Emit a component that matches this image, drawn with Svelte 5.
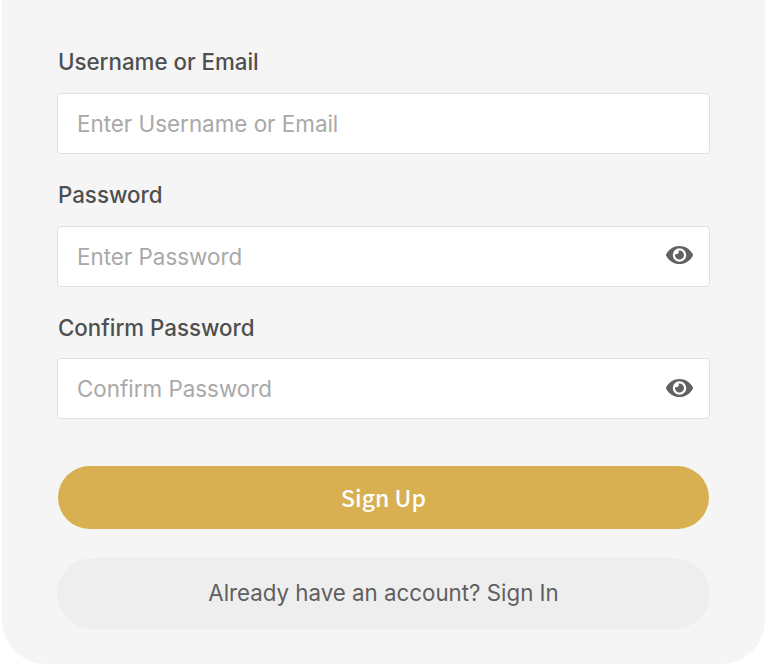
<script>
	const fields = [
		{ label: 'Username or Email', placeholder: 'Enter Username or Email', secret: false },
		{ label: 'Password', placeholder: 'Enter Password', secret: true },
		{ label: 'Confirm Password', placeholder: 'Confirm Password', secret: true }
	];
</script>

<div class="panel">
	<form class="form">
		{#each fields as f}
			<div class="field">
				<label for={f.label}>{f.label}</label>
				<div class="input-wrap">
					<input id={f.label} type={f.secret ? 'password' : 'text'} placeholder={f.placeholder} />
					{#if f.secret}
						<svg class="eye" viewBox="0 0 576 512" aria-hidden="true">
							<path d="M572.52 241.4C518.29 135.59 410.93 64 288 64S57.68 135.64 3.48 241.41a32.35 32.35 0 0 0 0 29.19C57.71 376.41 165.07 448 288 448s230.32-71.64 284.52-177.41a32.35 32.35 0 0 0 0-29.19zM288 400a144 144 0 1 1 144-144 143.93 143.93 0 0 1-144 144zm0-240a95.31 95.31 0 0 0-25.31 3.79 47.85 47.85 0 0 1-66.9 66.9A95.78 95.78 0 1 0 288 160z" />
						</svg>
					{/if}
				</div>
			</div>
		{/each}
		<button class="submit" type="button">Sign Up</button>
		<button class="signin" type="button">Already have an account? Sign In</button>
	</form>
</div>

<style>
	:global(body) {
		margin: 0;
		background: #fff;
	}

	.panel {
		box-sizing: border-box;
		width: 763px;
		height: 664px;
		margin-left: 2px;
		padding: 45.4px 55px 0;
		background: #f5f5f5;
		border-radius: 0 0 44px 44px;
		font-family: 'Inter', 'Liberation Sans', sans-serif;
	}

	.form {
		display: flex;
		flex-direction: column;
	}

	.field {
		margin-bottom: 24px;
	}

	label {
		display: block;
		height: 34px;
		margin-bottom: 13.6px;
		padding-left: 1px;
		font-size: 22.3px;
		font-weight: 550;
		line-height: 34px;
		color: #4f4f4f;
	}

	.input-wrap {
		position: relative;
	}

	input {
		box-sizing: border-box;
		display: block;
		width: 653px;
		height: 61px;
		padding: 0 19px;
		background: #fff;
		border: 1px solid #dedede;
		border-radius: 4px;
		outline: none;
		font: inherit;
		font-size: 22.4px;
		color: #4f4f4f;
	}

	input::placeholder {
		color: #a9a9a9;
		opacity: 1;
	}

	.eye {
		position: absolute;
		top: 17.4px;
		right: 17px;
		width: 27px;
		height: 24px;
		fill: #5f625f;
	}

	.submit {
		height: 63px;
		margin: 23px 1px 0;
		padding-bottom: 2px;
		background: #d8b051;
		border: none;
		border-radius: 32px;
		font-family: 'Noto Sans CJK SC', 'Noto Sans', sans-serif;
		font-size: 23px;
		font-weight: 500;
		color: #fff;
	}

	.signin {
		height: 71px;
		margin-top: 29px;
		padding-bottom: 4px;
		background: #eee;
		border: none;
		border-radius: 36px;
		font: inherit;
		font-size: 22.3px;
		color: #5f5f5f;
	}
</style>
